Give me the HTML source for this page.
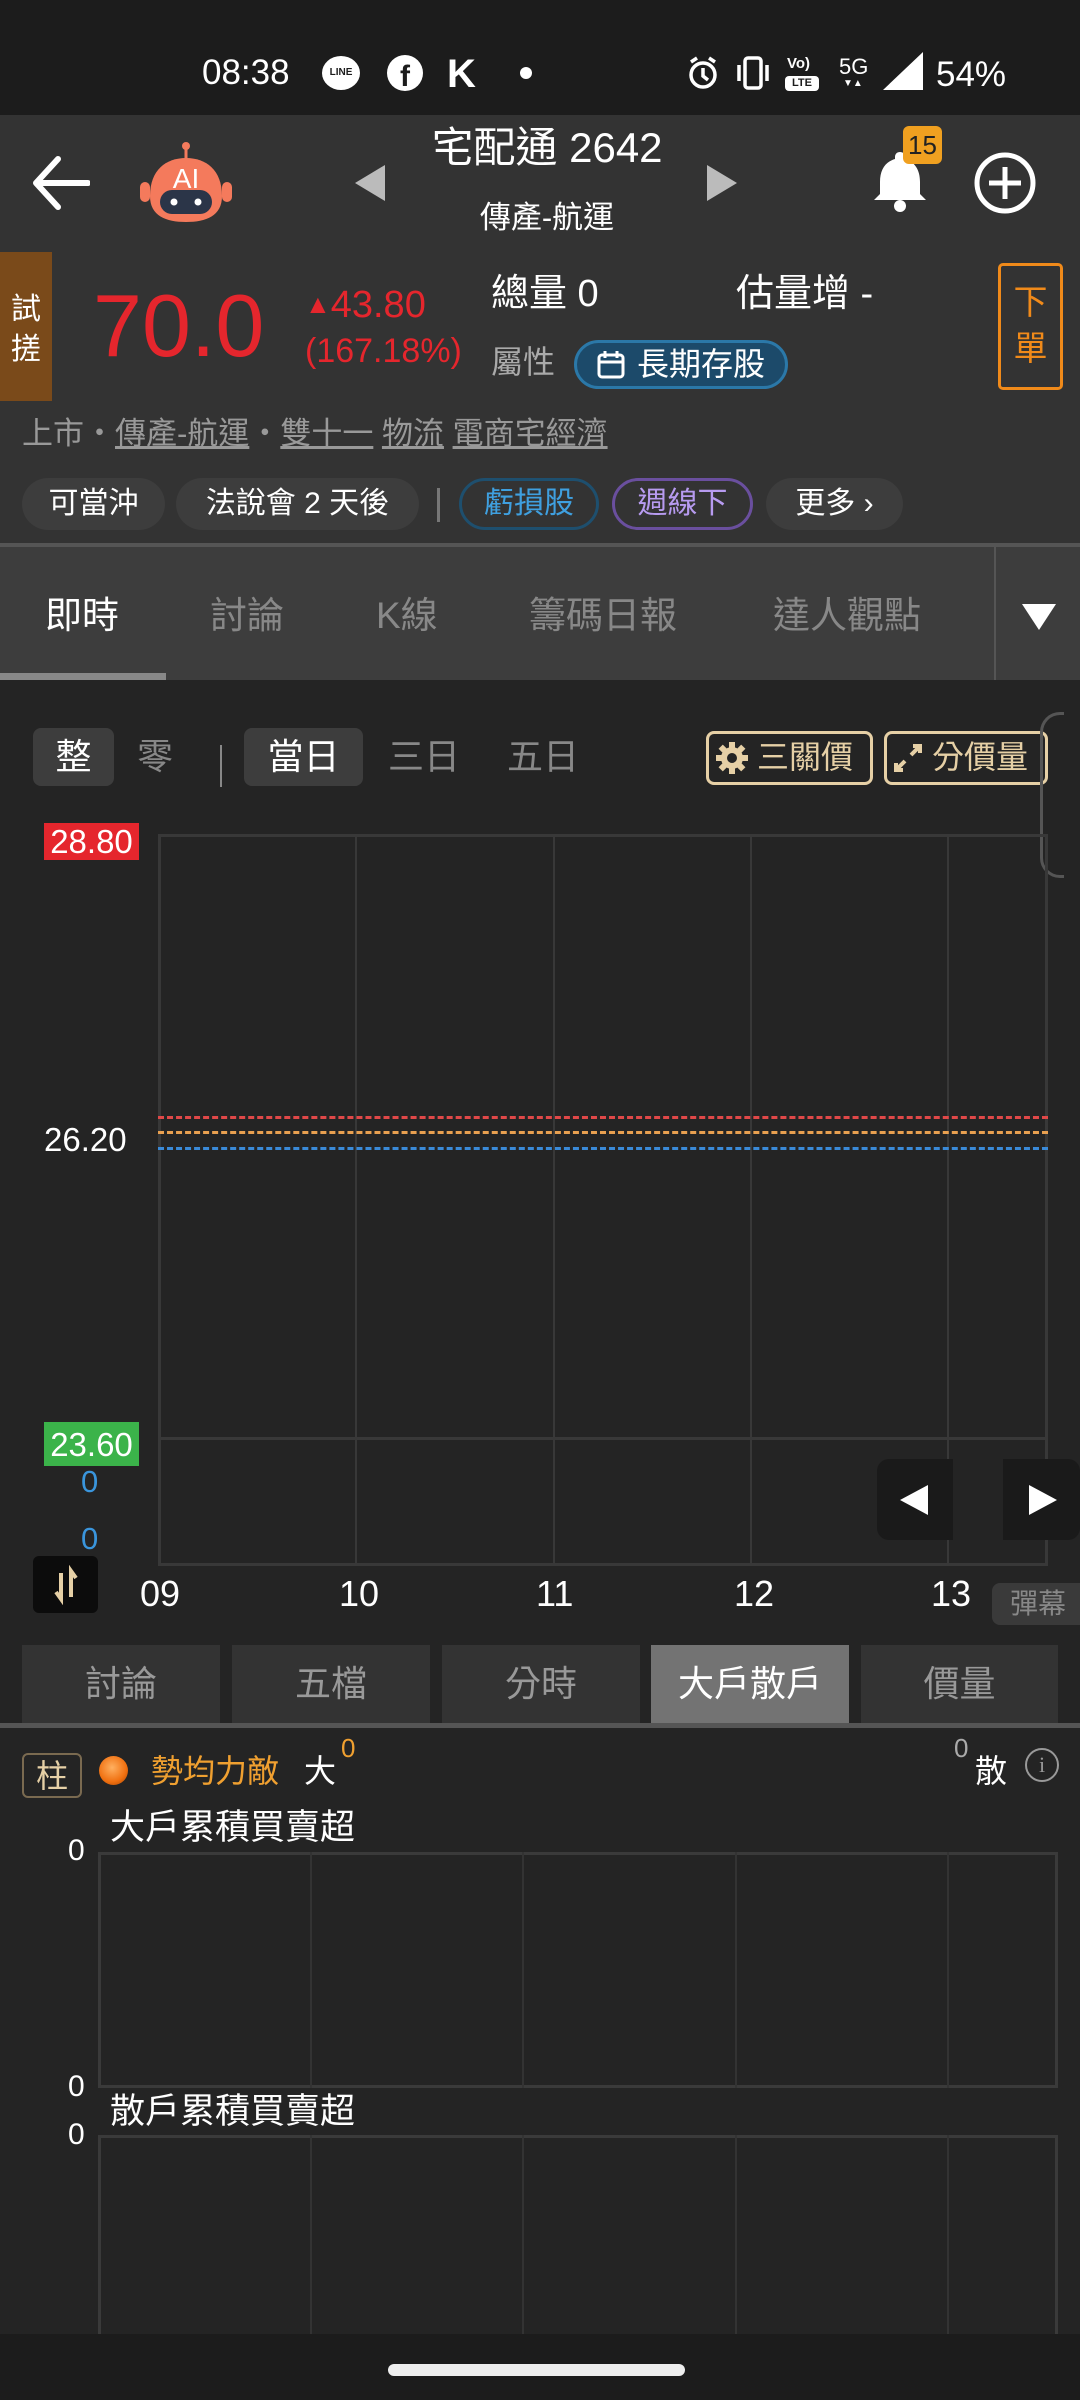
<!DOCTYPE html>
<html><head><meta charset="utf-8"><style>
*{margin:0;padding:0;box-sizing:border-box}
body{width:1080px;height:2400px;background:#242424;position:relative;overflow:hidden;font-family:"Liberation Sans","Noto Sans CJK TC",sans-serif;color:#fff}
.a{position:absolute;white-space:nowrap;line-height:1}
.c{display:flex;align-items:center;justify-content:center}
</style></head><body>
<!-- status bar -->
<div class="a" style="left:0;top:0;width:1080px;height:115px;background:#1c1c1c"></div>
<div class="a" style="left:202px;top:55px;font-size:35px">08:38</div>
<div class="a c" style="left:322px;top:56px;width:38px;height:34px;background:#fff;border-radius:50%;color:#1c1c1c;font-size:10px;font-weight:bold">LINE</div>
<div class="a c" style="left:387px;top:55px;width:36px;height:36px;background:#fff;border-radius:50%;color:#1c1c1c;font-size:30px;font-weight:bold;padding-top:8px">f</div>
<div class="a" style="left:447px;top:54px;font-size:40px;font-weight:bold">K</div>
<div class="a" style="left:520px;top:67px;width:12px;height:12px;background:#fff;border-radius:50%"></div>
<svg class="a" style="left:686px;top:55px" width="34" height="36" viewBox="0 0 34 36"><circle cx="17" cy="20" r="12" fill="none" stroke="#fff" stroke-width="3.5"/><path d="M17 13v8l5 4M5 7l6-4M29 7l-6-4" stroke="#fff" stroke-width="3.5" fill="none"/></svg>
<svg class="a" style="left:735px;top:55px" width="36" height="36" viewBox="0 0 36 36"><rect x="10" y="3" width="16" height="30" rx="3" fill="none" stroke="#fff" stroke-width="3.5"/><path d="M4 10v16M32 10v16" stroke="#fff" stroke-width="3.5"/></svg>
<div class="a" style="left:787px;top:56px;font-size:15px;font-weight:bold">Vo)</div>
<div class="a c" style="left:785px;top:76px;width:34px;height:15px;background:#fff;border-radius:4px;color:#1c1c1c;font-size:11px;font-weight:bold">LTE</div>
<div class="a" style="left:839px;top:56px;font-size:22px">5G</div>
<div class="a" style="left:843px;top:79px;font-size:10px">▼▲</div>
<svg class="a" style="left:883px;top:52px" width="40" height="38"><path d="M40 0V38H0Z" fill="#fff"/></svg>
<div class="a" style="left:936px;top:57px;font-size:35px">54%</div>

<!-- header -->
<div class="a" style="left:0;top:115px;width:1080px;height:428px;background:#333"></div>
<svg class="a" style="left:30px;top:155px" width="60" height="56" viewBox="0 0 60 56"><path d="M28 4L6 28l22 24M6 28h52" fill="none" stroke="#fff" stroke-width="6" stroke-linecap="round" stroke-linejoin="round"/></svg>
<svg class="a" style="left:136px;top:140px" width="100" height="85" viewBox="0 0 100 85"><line x1="50" y1="6" x2="50" y2="20" stroke="#f47a5c" stroke-width="3"/><circle cx="50" cy="6" r="4" fill="#f47a5c"/><rect x="4" y="42" width="10" height="20" rx="5" fill="#f47a5c"/><rect x="86" y="42" width="10" height="20" rx="5" fill="#f47a5c"/><path d="M14 56C14 30 30 18 50 18S86 30 86 56C86 76 70 82 50 82S14 76 14 56Z" fill="#f47a5c"/><rect x="24" y="50" width="52" height="24" rx="12" fill="#2b3548"/><circle cx="38" cy="62" r="3.5" fill="#fff"/><circle cx="62" cy="62" r="3.5" fill="#fff"/><text x="50" y="48" font-size="28" fill="#fff" text-anchor="middle" font-family="Liberation Sans">AI</text></svg>
<svg class="a" style="left:355px;top:165px" width="32" height="36"><path d="M30 0V36L0 18Z" fill="#bbb"/></svg>
<svg class="a" style="left:705px;top:165px" width="32" height="36"><path d="M2 0V36L32 18Z" fill="#bbb"/></svg>
<div class="a" style="left:0;width:1094px;text-align:center;top:127px;font-size:42px">宅配通 2642</div>
<div class="a" style="left:0;width:1094px;text-align:center;top:202px;font-size:31px">傳產-航運</div>
<svg class="a" style="left:870px;top:148px" width="60" height="64" viewBox="0 0 60 64"><path d="M30 4c-3 0-5 2-5 5v2C15 14 10 22 10 34v12L4 52h52l-6-6V34c0-12-5-20-15-23V9c0-3-2-5-5-5z" fill="#fff"/><circle cx="30" cy="58" r="6" fill="#fff"/></svg>
<div class="a c" style="left:903px;top:126px;width:39px;height:38px;background:#f0a020;border-radius:6px;color:#222;font-size:26px">15</div>
<svg class="a" style="left:973px;top:151px" width="64" height="64"><circle cx="32" cy="32" r="28" fill="none" stroke="#fff" stroke-width="5"/><path d="M32 16v32M16 32h32" stroke="#fff" stroke-width="5"/></svg>

<!-- info row -->
<div class="a" style="left:0;top:252px;width:52px;height:149px;background:#7a4a1a"></div>
<div class="a" style="left:11px;top:290px;font-size:30px;line-height:40px;white-space:normal;width:32px">試搓</div>
<div class="a" style="left:93px;top:282px;font-size:88px;color:#e5262d">70.0</div>
<div class="a" style="left:305px;top:286px;font-size:38px;color:#e5262d"><span style="font-size:26px;vertical-align:4px">▲</span>43.80</div>
<div class="a" style="left:305px;top:334px;font-size:34px;color:#e5262d">(167.18%)</div>
<div class="a" style="left:491px;top:275px;font-size:38px">總量 0</div>
<div class="a" style="left:736px;top:275px;font-size:38px">估量增 -</div>
<div class="a" style="left:491px;top:346px;font-size:32px;color:#aaa">屬性</div>
<div class="a" style="left:574px;top:340px;width:214px;height:49px;border:3px solid #2b78a8;background:#1c4a6a;border-radius:25px;font-size:32px;padding:5px 0 0 60px">長期存股</div>
<svg class="a" style="left:596px;top:350px" width="30" height="30"><rect x="3" y="5" width="24" height="22" rx="3" fill="none" stroke="#fff" stroke-width="3"/><path d="M3 12h24M9 1v7M21 1v7" stroke="#fff" stroke-width="3"/></svg>
<div class="a" style="left:998px;top:263px;width:65px;height:127px;border:3px solid #f08a1a;border-radius:5px;color:#f08a1a;font-size:34px;line-height:46px;text-align:center;white-space:normal;padding-top:14px">下單</div>

<div class="a" style="left:22px;top:418px;font-size:31px;color:#999">上市・<u>傳產-航運</u>・<u>雙十一</u> <u>物流</u> <u>電商宅經濟</u></div>

<div class="a c" style="left:22px;top:478px;width:143px;height:52px;background:#3d3d3d;border-radius:26px;font-size:30px">可當沖</div>
<div class="a c" style="left:176px;top:478px;width:243px;height:52px;background:#3d3d3d;border-radius:26px;font-size:30px">法說會 2 天後</div>
<div class="a" style="left:437px;top:488px;width:3px;height:34px;background:#777"></div>
<div class="a c" style="left:459px;top:478px;width:140px;height:52px;border:3px solid #1e4f6e;border-radius:26px;font-size:30px;color:#3fa0e0">虧損股</div>
<div class="a c" style="left:612px;top:478px;width:141px;height:52px;border:3px solid #6a4f9e;border-radius:26px;font-size:30px;color:#b79bf0">週線下</div>
<div class="a c" style="left:766px;top:478px;width:137px;height:52px;background:#3d3d3d;border-radius:26px;font-size:30px">更多 ›</div>

<!-- tab bar -->
<div class="a" style="left:0;top:543px;width:1080px;height:4px;background:#555"></div>
<div class="a" style="left:0;top:547px;width:1080px;height:133px;background:#3d3d3d"></div>
<div class="a" style="left:0;top:673px;width:166px;height:7px;background:#888"></div>
<div class="a" style="left:994px;top:547px;width:2px;height:133px;background:#555"></div>
<div class="a" style="left:45px;top:597px;font-size:37px">即時</div>
<div class="a" style="left:210px;top:597px;font-size:37px;color:#888">討論</div>
<div class="a" style="left:376px;top:597px;font-size:37px;color:#888">K線</div>
<div class="a" style="left:529px;top:597px;font-size:37px;color:#888">籌碼日報</div>
<div class="a" style="left:773px;top:597px;font-size:37px;color:#888">達人觀點</div>
<svg class="a" style="left:1022px;top:604px" width="34" height="26"><path d="M0 0H34L17 26Z" fill="#fff"/></svg>

<!-- toggles -->
<div class="a c" style="left:33px;top:728px;width:81px;height:58px;background:#3d3d3d;border-radius:8px;font-size:36px">整</div>
<div class="a" style="left:137px;top:739px;font-size:36px;color:#888">零</div>
<div class="a" style="left:220px;top:745px;width:2px;height:42px;background:#888"></div>
<div class="a c" style="left:244px;top:728px;width:119px;height:58px;background:#3d3d3d;border-radius:8px;font-size:36px">當日</div>
<div class="a" style="left:388px;top:739px;font-size:36px;color:#888">三日</div>
<div class="a" style="left:507px;top:739px;font-size:36px;color:#888">五日</div>
<div class="a" style="left:706px;top:731px;width:167px;height:54px;border:3px solid #e6d0a6;border-radius:8px;font-size:32px;color:#e6d0a6;padding:7px 0 0 48px">三關價</div>
<svg class="a" style="left:715px;top:741px" width="34" height="34" viewBox="0 0 34 34"><g fill="#e6d0a6"><circle cx="17" cy="17" r="11"/><rect x="14" y="1" width="6" height="32"/><rect x="1" y="14" width="32" height="6"/><rect x="14" y="1" width="6" height="32" transform="rotate(45 17 17)"/><rect x="14" y="1" width="6" height="32" transform="rotate(-45 17 17)"/></g><circle cx="17" cy="17" r="5" fill="#242424"/></svg>
<div class="a" style="left:884px;top:731px;width:164px;height:54px;border:3px solid #e6d0a6;border-radius:8px;font-size:32px;color:#e6d0a6;padding:7px 0 0 45px">分價量</div>
<svg class="a" style="left:893px;top:743px" width="30" height="30"><path d="M18 12l9-9M20 3h7v7M12 18l-9 9M3 20v7h7" stroke="#e6d0a6" stroke-width="4" fill="none"/></svg>
<div class="a" style="left:1040px;top:712px;width:24px;height:166px;border:3px solid #555;border-right:none;border-radius:20px 0 0 20px"></div>

<!-- main chart -->
<div class="a" style="left:158px;top:834px;width:890px;height:732px;border:3px solid #383838"></div>
<div class="a" style="left:355px;top:834px;width:2px;height:732px;background:#383838"></div>
<div class="a" style="left:553px;top:834px;width:2px;height:732px;background:#383838"></div>
<div class="a" style="left:750px;top:834px;width:2px;height:732px;background:#383838"></div>
<div class="a" style="left:947px;top:834px;width:2px;height:732px;background:#383838"></div>
<div class="a" style="left:158px;top:1437px;width:890px;height:3px;background:#383838"></div>
<div class="a" style="left:158px;top:1116px;width:890px;border-top:3px dashed #e04848"></div>
<div class="a" style="left:158px;top:1131px;width:890px;border-top:3px dashed #e8a050"></div>
<div class="a" style="left:158px;top:1147px;width:890px;border-top:3px dashed #3a8ad8"></div>
<div class="a c" style="left:44px;top:823px;width:95px;height:37px;background:#e5262d;font-size:33px">28.80</div>
<div class="a" style="left:44px;top:1123px;font-size:33px">26.20</div>
<div class="a c" style="left:44px;top:1422px;width:95px;height:44px;background:#3bb34a;font-size:33px">23.60</div>
<div class="a" style="left:81px;top:1466px;font-size:31px;color:#3a95dc">0</div>
<div class="a" style="left:81px;top:1523px;font-size:31px;color:#3a95dc">0</div>
<div class="a c" style="left:877px;top:1459px;width:76px;height:81px;background:#1a1a1a;border-radius:12px 0 0 12px"><svg width="30" height="30"><path d="M28 0V30L0 15Z" fill="#fff"/></svg></div>
<div class="a c" style="left:1003px;top:1459px;width:77px;height:81px;background:#1a1a1a;border-radius:0 12px 12px 0"><svg width="30" height="30"><path d="M2 0V30L30 15Z" fill="#fff"/></svg></div>
<div class="a c" style="left:33px;top:1556px;width:65px;height:57px;background:#0c0c0c;border-radius:6px"><svg width="30" height="40"><path d="M10 8v26l-5-7M20 32V6l5 7" stroke="#e6d0a6" stroke-width="4" fill="none"/></svg></div>
<div class="a" style="left:140px;top:1576px;font-size:36px">09</div>
<div class="a" style="left:339px;top:1576px;font-size:36px">10</div>
<div class="a" style="left:536px;top:1576px;font-size:36px">11</div>
<div class="a" style="left:734px;top:1576px;font-size:36px">12</div>
<div class="a" style="left:931px;top:1576px;font-size:36px">13</div>
<div class="a c" style="left:992px;top:1583px;width:92px;height:42px;background:#3a3a3a;border-radius:8px 0 0 8px;font-size:28px;color:#888">彈幕</div>

<!-- bottom tabs -->
<div class="a c" style="left:22px;top:1645px;width:198px;height:78px;background:#333;font-size:36px;color:#999">討論</div>
<div class="a c" style="left:232px;top:1645px;width:198px;height:78px;background:#333;font-size:36px;color:#999">五檔</div>
<div class="a c" style="left:442px;top:1645px;width:198px;height:78px;background:#333;font-size:36px;color:#999">分時</div>
<div class="a c" style="left:651px;top:1645px;width:198px;height:78px;background:#737373;font-size:36px">大戶散戶</div>
<div class="a c" style="left:861px;top:1645px;width:197px;height:78px;background:#333;font-size:36px;color:#999">價量</div>
<div class="a" style="left:0;top:1723px;width:1080px;height:5px;background:#555"></div>

<div class="a c" style="left:22px;top:1753px;width:60px;height:45px;border:2px solid #7a6a50;border-radius:6px;font-size:32px;color:#e6d0a6">柱</div>
<div class="a" style="left:99px;top:1756px;width:29px;height:29px;border-radius:50%;background:radial-gradient(circle at 45% 40%,#ffb060,#f07010 60%,#a04000)"></div>
<div class="a" style="left:151px;top:1755px;font-size:32px;color:#f0a030">勢均力敵</div>
<div class="a" style="left:304px;top:1755px;font-size:32px">大</div>
<div class="a" style="left:341px;top:1735px;font-size:26px;color:#f0a030">0</div>
<div class="a" style="left:954px;top:1735px;font-size:26px;color:#aaa">0</div>
<div class="a" style="left:975px;top:1755px;font-size:32px">散</div>
<div class="a c" style="left:1025px;top:1748px;width:34px;height:34px;border:2px solid #999;border-radius:50%;font-size:22px;color:#999;font-family:'Liberation Serif',serif">i</div>

<div class="a" style="left:110px;top:1810px;font-size:35px">大戶累積買賣超</div>
<div class="a" style="left:68px;top:1836px;font-size:30px">0</div>
<div class="a" style="left:98px;top:1852px;width:960px;height:236px;border:3px solid #3a3a3a"></div>
<div class="a" style="left:310px;top:1852px;width:2px;height:236px;background:#333"></div>
<div class="a" style="left:522px;top:1852px;width:2px;height:236px;background:#333"></div>
<div class="a" style="left:735px;top:1852px;width:2px;height:236px;background:#333"></div>
<div class="a" style="left:947px;top:1852px;width:2px;height:236px;background:#333"></div>
<div class="a" style="left:68px;top:2072px;font-size:30px">0</div>
<div class="a" style="left:110px;top:2094px;font-size:35px">散戶累積買賣超</div>
<div class="a" style="left:68px;top:2120px;font-size:30px">0</div>
<div class="a" style="left:98px;top:2135px;width:960px;height:260px;border:3px solid #3a3a3a"></div>
<div class="a" style="left:310px;top:2135px;width:2px;height:200px;background:#333"></div>
<div class="a" style="left:522px;top:2135px;width:2px;height:200px;background:#333"></div>
<div class="a" style="left:735px;top:2135px;width:2px;height:200px;background:#333"></div>
<div class="a" style="left:947px;top:2135px;width:2px;height:200px;background:#333"></div>

<div class="a" style="left:0;top:2334px;width:1080px;height:66px;background:#1c1c1c"></div>
<div class="a" style="left:388px;top:2364px;width:297px;height:12px;background:#eee;border-radius:6px"></div>
</body></html>
